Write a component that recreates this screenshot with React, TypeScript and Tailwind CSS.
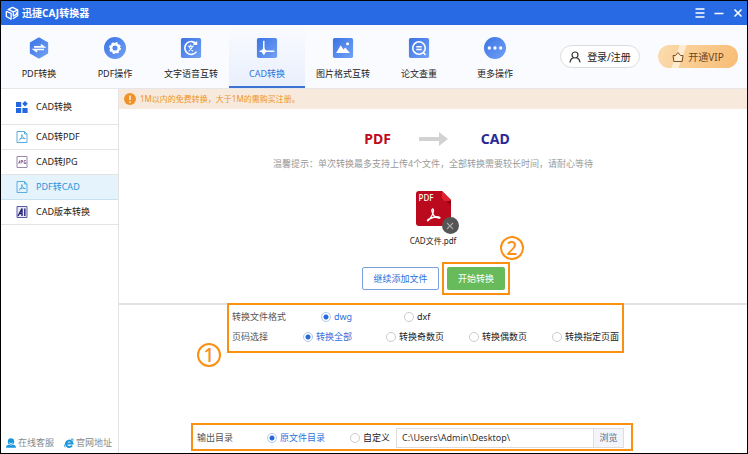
import { useState } from "react";
import type { ReactNode } from "react";

const TABS = [
  { id: "pdf", label: "PDF转换" },
  { id: "pdfop", label: "PDF操作" },
  { id: "voice", label: "文字语音互转" },
  { id: "cad", label: "CAD转换" },
  { id: "image", label: "图片格式互转" },
  { id: "check", label: "论文查重" },
  { id: "more", label: "更多操作" },
];

const SIDE = [
  { id: "topdf", label: "CAD转PDF" },
  { id: "tojpg", label: "CAD转JPG" },
  { id: "tocad", label: "PDF转CAD" },
  { id: "version", label: "CAD版本转换" },
];

const PAGES = ["转换全部", "转换奇数页", "转换偶数页", "转换指定页面"];

const TAB_SHAPES: Record<string, ReactNode> = {
  pdf: (
    <>
      <path d="M12 1.500 21 6.500v11L12 22.500 3 17.500v-11z" fill="url(#tab)" stroke="url(#tab)" strokeWidth="2" strokeLinejoin="round" />
      <path d="M6.500 10.800h11l-3.500-2.600M17.500 13.600h-11l3.500 2.600" fill="none" stroke="#fff" strokeWidth="1.700" />
    </>
  ),
  pdfop: (
    <>
      <circle cx="12" cy="12" r="12" fill="url(#tab)" />
      <circle cx="12" cy="12" r="4.200" fill="none" stroke="#fff" strokeWidth="2.800" />
      <circle cx="12" cy="12" r="5.600" fill="none" stroke="#fff" strokeWidth="1.800" strokeDasharray="2.200 2.200" />
    </>
  ),
  voice: (
    <>
      <rect x="1" y="1" width="22" height="22" rx="2" fill="url(#tab)" />
      <path d="M18 8a7 7 0 1 0 0 8M14.500 8H18V5" fill="none" stroke="#fff" strokeWidth="1.700" />
      <path d="M8.500 10h6.500M11.700 8.300V10M9.500 15.500c2.200-1.200 3.600-3 4.200-5.500M9.700 10c.8 2.500 2.200 4.300 4.600 5.500" fill="none" stroke="#fff" strokeWidth="1.100" />
    </>
  ),
  cad: (
    <>
      <rect x="1" y="1" width="22" height="22" rx="2" fill="url(#tab)" />
      <path d="M8.500 4v15M4 15.500h16" stroke="#fff" strokeWidth="1.600" />
      <path d="M8.500 11.500 11.500 15.500l-3 4-3-4z" fill="#fff" />
    </>
  ),
  image: (
    <>
      <rect x="1" y="1" width="22" height="22" rx="2" fill="url(#tab)" />
      <path d="M4.500 17.500 9.500 9l3 4.500 2-2 5 6z" fill="#fff" />
      <rect x="15.500" y="6" width="3" height="3" rx="1" fill="#fff" />
    </>
  ),
  check: (
    <>
      <rect x="1" y="1" width="22" height="22" rx="2" fill="url(#tab)" />
      <circle cx="12" cy="12" r="6.800" fill="none" stroke="#fff" strokeWidth="1.700" />
      <path d="M9 10.600h6M9 13.600h6M16.500 16.800l2.700 2.700" stroke="#fff" strokeWidth="1.600" />
    </>
  ),
  more: (
    <>
      <circle cx="12" cy="12" r="12" fill="url(#tab)" />
      <circle cx="5.800" cy="12" r="1.800" fill="#fff" />
      <circle cx="12" cy="12" r="1.800" fill="#fff" />
      <circle cx="18.200" cy="12" r="1.800" fill="#fff" />
    </>
  ),
};

function TabIcon({ id }: { id: string }) {
  return (
    <svg viewBox="0 0 24 24" className="size-[22px]" aria-hidden="true">
      <defs>
        <linearGradient id="tab" x1="0" y1="0" x2="1" y2="1">
          <stop offset="0" stopColor="#3a73e4" />
          <stop offset="1" stopColor="#72a1f5" />
        </linearGradient>
      </defs>
      {TAB_SHAPES[id]}
    </svg>
  );
}

function SideIcon({ id }: { id: string }) {
  if (id === "tojpg") {
    return (
      <svg viewBox="0 0 12 12" className="size-3" aria-hidden="true">
        <path d="M1 .5h10v11H1z" fill="#fff" stroke="#9c8aa8" />
        <path d="M3.500 4.500v2.500H2M5 7.500v-3h1.500V6H5M9.800 4.500H8.200v3h1.600V6" fill="none" stroke="#75507f" strokeWidth=".8" />
      </svg>
    );
  }
  if (id === "version") {
    return (
      <svg viewBox="0 0 12 12" className="size-3" aria-hidden="true">
        <path d="M1 .5h10v11H1z" fill="#e9e9f6" stroke="#5a5aa0" />
        <path d="M2 10 6 2.500V10M3.500 7.500H6M8.800 2.500V10" fill="none" stroke="#23237a" strokeWidth="1.400" />
      </svg>
    );
  }
  return (
    <svg viewBox="0 0 12 12" className="size-3" aria-hidden="true">
      <path d="M1 .5h7.500L11 3v8.500H1zM8.500.5V3H11" fill="none" stroke="#5aade0" />
      <path d="M5.800 3.500c.6 2.500 1.600 3.800 3.600 4.200M5.800 3.500C6 6 5 8 2.800 9.500M3.800 7.800c1.600-.6 3.400-.8 5.600-.1" fill="none" stroke="#3a9bd8" strokeWidth=".8" />
    </svg>
  );
}

type ChoiceProps = {
  name: string;
  label: string;
  checked: boolean;
  onPick: () => void;
  className?: string;
};

function Choice({ name, label, checked, onPick, className = "" }: ChoiceProps) {
  return (
    <label
      className={`flex shrink-0 items-center gap-[3px] whitespace-nowrap ${
        checked ? "text-[#2e72dc]" : "text-[#222]"
      } ${className}`}
    >
      <input
        type="radio"
        name={name}
        checked={checked}
        onChange={onPick}
        className="size-2.5 appearance-none rounded-full border border-[#ccc] bg-white checked:border-[#b3c8ea] checked:bg-[radial-gradient(circle,#2468dc_2px,transparent_3px)]"
      />
      {label}
    </label>
  );
}

export default function App() {
  const [tab, setTab] = useState("cad");
  const [side, setSide] = useState("tocad");
  const [format, setFormat] = useState("dwg");
  const [pages, setPages] = useState(PAGES[0]);
  const [target, setTarget] = useState("source");
  const [path, setPath] = useState("C:\\Users\\Admin\\Desktop\\");

  return (
    <div className="flex min-h-screen flex-col border border-black bg-white font-['Noto_Sans','Noto_Sans_CJK_SC',sans-serif] text-[9px] leading-[14px] text-[#333]">
      {/* Title bar */}
      <header className="flex h-6 items-center justify-between bg-[#286ae4] px-1 text-white">
        <div className="flex items-center gap-[3px]">
          <svg viewBox="0 0 16 16" className="size-3.5" aria-hidden="true">
            <path d="M3 4.500 8.500 1.500 14.500 4.500v6.500L9 14.500M1.500 6v6L7 15V8.500L1.500 6M4.500 4.200l5 2.500 4.500-2M9.500 7v4.500l3.500-2V7" fill="none" stroke="#fff" strokeWidth="1.500" strokeLinejoin="round" />
          </svg>
          <h1 className="text-[10px] font-bold">迅捷CAJ转换器</h1>
        </div>
        <div className="flex items-center gap-[9px]">
          <button aria-label="菜单">
            <svg viewBox="0 0 10 10" className="size-2.5">
              <path d="M.5 1h9M.5 5h9M.5 9h9" stroke="#fff" strokeWidth="1.400" />
            </svg>
          </button>
          <button aria-label="最小化">
            <svg viewBox="0 0 10 10" className="size-2.5">
              <path d="M.5 5.500h9" stroke="#fff" strokeWidth="1.500" />
            </svg>
          </button>
          <button aria-label="关闭">
            <svg viewBox="0 0 10 10" className="size-2.5">
              <path d="m1.500 1.500 7 7M8.500 1.500l-7 7" stroke="#fff" strokeWidth="1.500" />
            </svg>
          </button>
        </div>
      </header>

      {/* Toolbar */}
      <div className="flex h-16 items-stretch border-b border-[#e6e6ea] bg-[#fafbff]">
        <nav className="flex">
          {TABS.map(({ id, label }) => (
            <button
              key={id}
              onClick={() => setTab(id)}
              className={`flex w-[76px] flex-col items-center gap-2 border-b-2 pt-3 whitespace-nowrap ${
                tab === id
                  ? "border-[#3a73d0] bg-linear-to-b from-[#fafbff] to-[#e9effc] text-[#2e72dc]"
                  : "border-transparent text-[#222]"
              }`}
            >
              <TabIcon id={id} />
              {label}
            </button>
          ))}
        </nav>
        <div className="ml-auto flex items-center gap-[18px] pt-1 pr-[9px] pb-1 text-[10px] whitespace-nowrap">
          <button className="flex h-[23px] w-20 items-center justify-center gap-1.5 rounded-full border border-[#dcdce0] bg-white text-[#222]">
            <svg viewBox="0 0 12 12" className="size-3" aria-hidden="true">
              <circle cx="6" cy="4" r="3" fill="none" stroke="#333" strokeWidth="1.200" />
              <path d="M1 11.500c.3-2.800 2-4.300 3.800-4.800M11 11.500c-.3-2.800-2-4.300-3.800-4.800" fill="none" stroke="#333" strokeWidth="1.200" />
            </svg>
            登录/注册
          </button>
          <button className="flex h-[23px] w-20 items-center justify-center gap-1 rounded-full bg-[linear-gradient(110deg,#fbdcae_0%,#fad3a0_24%,#fdecd2_25%,#fdecd2_32%,#fad098_33%,#f7bc74_100%)] text-[#6e4521]">
            <svg viewBox="0 0 12 12" className="size-3" aria-hidden="true">
              <path d="M1 4.500h2.500L6 1.500 8.500 4.500H11l-.8 6H1.800z" fill="none" stroke="#7c4f25" strokeLinejoin="round" />
            </svg>
            开通VIP
          </button>
        </div>
      </div>

      <div className="flex flex-1">
        {/* Sidebar */}
        <aside className="flex w-[118px] shrink-0 flex-col border-r border-[#e4e4e4]">
          <h2 className="flex h-9 items-center gap-2 border-b border-[#e4e4e4] pl-[15px] text-[#222]">
            <svg viewBox="0 0 12 12" className="size-3" aria-hidden="true">
              <path d="M0 1h5.200v5H0zM0 7h5.200v5H0zM6.400 7h5.200v5H6.400zM9 0l2.800 2.800L9 5.600 6.200 2.800z" fill="#2468e0" />
            </svg>
            CAD转换
          </h2>
          {SIDE.map(({ id, label }) => (
            <button
              key={id}
              onClick={() => setSide(id)}
              className={`flex h-[25px] items-center gap-2 border-b pl-[15px] ${
                side === id
                  ? "border-[#c9e2ef] bg-[#e5f3fd] text-[#2b93d8]"
                  : "border-[#e4e4e4] text-[#222]"
              }`}
            >
              <SideIcon id={id} />
              {label}
            </button>
          ))}
          <div className="mt-auto flex gap-2.5 pb-[3px] pl-[5px] text-[#888]">
            <a href="#service" className="flex items-center gap-0.5">
              <svg viewBox="0 0 10 10" className="size-2.5" aria-hidden="true">
                <circle cx="5" cy="3.500" r="3.200" fill="#1b95dc" />
                <path d="M0 9.800C.3 6.300 3 6.300 5 7.500c2-1.200 4.700-1.200 5 2.300z" fill="#1b95dc" />
                <path d="M3 4.500c1 1.500 3 1.500 4 0" fill="none" stroke="#fff" strokeWidth=".7" />
              </svg>
              在线客服
            </a>
            <a href="#site" className="flex items-center gap-0.5">
              <svg viewBox="0 0 10 10" className="size-2.5" aria-hidden="true">
                <path d="M2.500 5.500h6A3.200 3.200 0 1 0 8 7.500" fill="none" stroke="#1b95dc" strokeWidth="2" />
                <path d="M1.200 9.300C0 8.500 1 6 2.500 4M7 1.300c1.600-.8 2.600-.4 2 1.500" fill="none" stroke="#1b95dc" />
              </svg>
              官网地址
            </a>
          </div>
        </aside>

        {/* Main */}
        <main className="flex min-w-0 flex-1 flex-col">
          <p className="flex h-5 items-center gap-1 bg-[#f7eadc] pl-[5px] text-[8px] text-[#ee9327]">
            <svg viewBox="0 0 12 12" className="size-3" aria-hidden="true">
              <circle cx="6" cy="6" r="6" fill="#f0922a" />
              <path d="M6 2.500v4.500M6 8.200v1.500" stroke="#fff" strokeWidth="1.300" />
            </svg>
            1M以内的免费转换，大于1M的需购买注册。
          </p>

          <section className="flex flex-col items-center pt-5 pb-2">
            <div className="flex items-center gap-7 pl-2 text-[14px] leading-5 font-bold">
              <span className="text-[#bd0a1c]">PDF</span>
              <svg viewBox="0 0 34 16" className="h-4 w-[34px]" aria-hidden="true">
                <path d="M0 6h20V1l9 7-9 7v-5H0z" fill="#d2d2d2" />
              </svg>
              <span className="text-[#2a2a96]">CAD</span>
            </div>
            <p className="mt-2 text-[#999]">
              温馨提示：单次转换最多支持上传4个文件，全部转换需要较长时间，请耐心等待
            </p>

            <div className="relative mt-5">
              <svg viewBox="0 0 35 35" className="size-[35px]" aria-hidden="true">
                <path d="M3 0h23l9 9v23a3 3 0 0 1-3 3H3a3 3 0 0 1-3-3V3a3 3 0 0 1 3-3z" fill="#bb0a1d" />
                <path d="M25 7c2 3 6 4 10 2.500V14z" fill="#8c0714" />
                <path d="M26 0l9 9c-1.500 1.500-5 1.500-8 .5C25.500 7 25.500 3 26 0z" fill="#e0222c" />
                <path d="M16.500 18c-1 .5-.5 3 .5 5 1 2.200 3 3.800 6 4.200 1.500 0 1.200-1.200-.5-1.400-3.500-.3-7 .8-10 2.600-1.800 1.200-1 2 .2.600 2-2.200 4.600-6.500 4.800-9.500 0-1-.4-1.600-1-1.500z" fill="none" stroke="#fff" strokeWidth="1.300" />
              </svg>
              <span className="absolute top-0 left-[3px] text-[8px] font-medium text-white">PDF</span>
              <button
                aria-label="移除文件"
                className="absolute -right-2 -bottom-2 flex size-[17px] items-center justify-center rounded-full bg-[#555]"
              >
                <svg viewBox="0 0 8 8" className="size-2">
                  <path d="m1 1 6 6M7 1 1 7" stroke="#aaa" strokeWidth="1.100" />
                </svg>
              </button>
            </div>
            <p className="mt-2 text-[8px] text-[#222]">CAD文件.pdf</p>

            <div className="mt-3.5 flex items-center gap-[3px] pl-1.5">
              <button className="h-[23px] w-[77px] rounded-xs border border-[#7ba0de] text-[#2e6fd6]">
                继续添加文件
              </button>
              <div className="relative border-2 border-[#fb8f12] p-[3px]">
                <button className="block h-[23px] w-[58px] rounded-xs bg-[#68bb5a] text-white">
                  开始转换
                </button>
                <span className="absolute -top-7 -right-4 flex size-6 items-center justify-center rounded-full border-2 border-[#fb8f12] text-[19px] font-medium text-[#fb8f12]">
                  2
                </span>
              </div>
            </div>
          </section>

          <section className="flex flex-1 flex-col border-t-2 border-[#e2e2e2]">
            <div className="relative -mt-0.5 ml-[108px] w-[397px] border-2 border-[#fb8f12] pt-0.5 pb-1 pl-[3px] text-[#555]">
              <div className="flex h-5 items-center" role="radiogroup" aria-labelledby="format">
                <span id="format" className="w-[89px]">转换文件格式</span>
                {["dwg", "dxf"].map((f) => (
                  <Choice
                    key={f}
                    name="format"
                    label={f}
                    checked={format === f}
                    onPick={() => setFormat(f)}
                    className="w-[83px]"
                  />
                ))}
              </div>
              <div className="flex h-5 items-center" role="radiogroup" aria-labelledby="pages">
                <span id="pages" className="w-[71px]">页码选择</span>
                {PAGES.map((p) => (
                  <Choice
                    key={p}
                    name="pages"
                    label={p}
                    checked={pages === p}
                    onPick={() => setPages(p)}
                    className="w-[83px] last:w-auto"
                  />
                ))}
              </div>
              <span className="absolute -bottom-4 -left-8 flex size-6 items-center justify-center rounded-full border-2 border-[#fb8f12] text-[19px] font-medium text-[#fb8f12]">
                1
              </span>
            </div>

            <div
              role="radiogroup"
              aria-labelledby="output"
              className="mt-auto mb-0.5 ml-[72px] flex h-7 w-[442px] items-center border-2 border-[#fb8f12] pt-0.5 pl-1"
            >
              <span id="output" className="w-[70px] text-[#555]">输出目录</span>
              <Choice
                name="output"
                label="原文件目录"
                checked={target === "source"}
                onPick={() => setTarget("source")}
                className="w-[83px]"
              />
              <Choice
                name="output"
                label="自定义"
                checked={target === "custom"}
                onPick={() => setTarget("custom")}
                className="w-[46px]"
              />
              <div className="mr-[7px] flex h-5 flex-1 border border-[#ddd]">
                <input
                  aria-label="输出路径"
                  value={path}
                  onChange={(e) => setPath(e.target.value)}
                  className="min-w-0 flex-1 px-[5px] text-[#333]"
                />
                <button className="w-[30px] border-l border-[#ddd] bg-[#f4f5fa] text-[#667]">
                  浏览
                </button>
              </div>
            </div>
          </section>
        </main>
      </div>
    </div>
  );
}
